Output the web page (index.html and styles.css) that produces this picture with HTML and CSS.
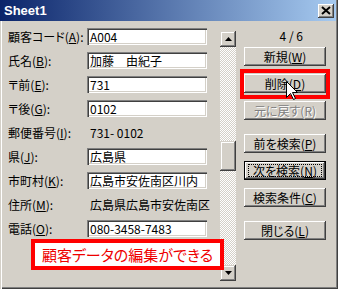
FILE: index.html
```html
<!DOCTYPE html>
<html lang="ja">
<head>
    <meta charset="UTF-8">
    <title>Sheet1</title>
    <link rel="stylesheet" href="styles.css">
</head>
<body>
<div class="window">
    <div class="titlebar">
        <span class="title">Sheet1</span>
        <span class="close-btn">
            <svg width="10" height="9" viewBox="0 0 10 9"><path d="M1 1l8 7M9 1l-8 7" stroke="#000" stroke-width="2"/></svg>
        </span>
    </div>
    <div class="content">
        <div class="form">
            <div class="label">顧客コード(<u>A</u>):</div><div class="field">A004</div>
            <div class="label">氏名(<u>B</u>):</div><div class="field">加藤　由紀子</div>
            <div class="label">〒前(<u>E</u>):</div><div class="field">731</div>
            <div class="label">〒後(<u>G</u>):</div><div class="field">0102</div>
            <div class="label">郵便番号(<u>I</u>):</div><div class="value">731- 0102</div>
            <div class="label">県(<u>J</u>):</div><div class="field">広島県</div>
            <div class="label">市町村(<u>K</u>):</div><div class="field">広島市安佐南区川内</div>
            <div class="label">住所(<u>M</u>):</div><div class="value">広島県広島市安佐南区</div>
            <div class="label">電話(<u>O</u>):</div><div class="field">080-3458-7483</div>
        </div>
        <div class="scrollbar">
            <div class="sb-btn"><svg width="7" height="4" viewBox="0 0 7 4"><path d="M3.5 0L7 4H0z"/></svg></div>
            <div class="sb-track"><div class="sb-thumb"></div></div>
            <div class="sb-btn"><svg width="7" height="4" viewBox="0 0 7 4"><path d="M0 0h7L3.5 4z"/></svg></div>
        </div>
        <div class="actions">
            <div class="counter">4 / 6</div>
            <div class="btn">新規(<u>W</u>)</div>
            <div class="btn">削除(<u>D</u>)</div>
            <div class="btn disabled">元に戻す(R)</div>
            <div class="btn group">前を検索(<u>P</u>)</div>
            <div class="btn default"><span>次を検索(<u>N</u>)</span></div>
            <div class="btn">検索条件(<u>C</u>)</div>
            <div class="btn group">閉じる(<u>L</u>)</div>
        </div>
    </div>

    <div class="mark"></div>
    <div class="note">顧客データの編集ができる</div>
    <svg class="cursor" width="13" height="20" viewBox="0 0 13 20">
        <path d="M0.5 0.5V16.5L4.5 12.5L7.5 18.5L9.5 17.5L6.5 11.5H11.5Z" fill="#fff" stroke="#000"/>
    </svg>
</div>
</body>
</html>
```

FILE: styles.css
```css
* {
    box-sizing: border-box;
}

body {
    margin: 0;
    background: #d4d0c8;
    font-family: "Noto Sans CJK JP", sans-serif;
    font-size: 12px;
    font-feature-settings: "palt";
    color: #000;
}

.window {
    position: relative;
    width: 338px;
    height: 289px;
    padding: 0 2px 2px 2px;
    background: #d4d0c8;
    box-shadow: inset 1px 0 #d4d0c8, inset 2px 0 #fff, inset -1px -1px #404040, inset -2px -2px #808080;
}

/* title bar */
.titlebar {
    display: flex;
    align-items: center;
    justify-content: space-between;
    height: 21px;
    margin-left: -2px;
    padding: 0 2px 0 4px;
    background: linear-gradient(to right, #0a246a, #a6caf0);
}
.title {
    color: #fff;
    font-family: "Liberation Sans", sans-serif;
    font-weight: bold;
    font-size: 13px;
}
.close-btn {
    display: flex;
    align-items: center;
    justify-content: center;
    width: 16px;
    height: 14px;
    background: #d4d0c8;
    box-shadow: inset -1px -1px #404040, inset 1px 1px #fff, inset -2px -2px #808080;
}

.content {
    display: flex;
    padding-top: 7px;
}

/* fields */
.form {
    display: grid;
    grid-template-columns: 79px 120px;
    grid-auto-rows: 17px;
    row-gap: 7px;
    padding-left: 6px;
}
.label {
    line-height: 17px;
    white-space: nowrap;
}
.field {
    height: 17px;
    line-height: 17px;
    padding-left: 3px;
    background: #fff;
    white-space: nowrap;
    overflow: hidden;
    box-shadow: inset 1px 1px #808080, inset 2px 2px #404040, inset -1px -1px #fff, inset -2px -2px #d4d0c8;
}
.value {
    line-height: 17px;
    padding-left: 3px;
    white-space: nowrap;
}

/* scrollbar */
.scrollbar {
    display: flex;
    flex-direction: column;
    width: 16px;
    height: 250px;
    margin: 3px 0 0 13px;
}
.sb-btn {
    display: flex;
    align-items: center;
    justify-content: center;
    height: 16px;
    background: #d4d0c8;
    box-shadow: inset -1px -1px #404040, inset 1px 1px #d4d0c8, inset -2px -2px #808080, inset 2px 2px #fff;
}
.sb-track {
    flex: 1;
    padding-top: 94px;
    background: repeating-conic-gradient(#fff 0 25%, #d4d0c8 0 50%) 0 0 / 2px 2px;
}
.sb-thumb {
    height: 30px;
    background: #d4d0c8;
    box-shadow: inset -1px -1px #404040, inset 1px 1px #d4d0c8, inset -2px -2px #808080, inset 2px 2px #fff;
}

/* buttons */
.actions {
    display: flex;
    flex-direction: column;
    gap: 8px;
    width: 82px;
    margin-left: 8px;
}
.counter {
    line-height: 15px;
    margin-bottom: -4px;
    padding-right: 23px;
    text-align: right;
}
.btn {
    display: flex;
    align-items: center;
    justify-content: center;
    height: 19px;
    background: #d4d0c8;
    box-shadow: inset -1px -1px #404040, inset 1px 1px #fff, inset -2px -2px #808080;
    white-space: nowrap;
}
.btn.group {
    margin-top: 6px;
}
.btn.disabled {
    color: #808080;
    text-shadow: 1px 1px #fff;
}
.btn.default {
    padding: 4px 4px;
    box-shadow: inset 0 0 0 1px #000, inset -2px -2px #404040, inset 2px 2px #fff, inset -3px -3px #808080;
}
.btn.default span {
    flex: 1;
    height: 13px;
    line-height: 11px;
    text-align: center;
    border: 1px dotted #000;
}

/* annotations */
.mark {
    position: absolute;
    left: 240px;
    top: 69px;
    width: 90px;
    height: 30px;
    border: 4px solid #f00;
}
.note {
    position: absolute;
    left: 31px;
    top: 239px;
    width: 193px;
    height: 31px;
    border: 4px solid #f00;
    background: #fff;
    color: #e00;
    font-size: 15px;
    line-height: 23px;
    text-align: center;
}
.cursor {
    position: absolute;
    left: 286px;
    top: 81px;
}
```
